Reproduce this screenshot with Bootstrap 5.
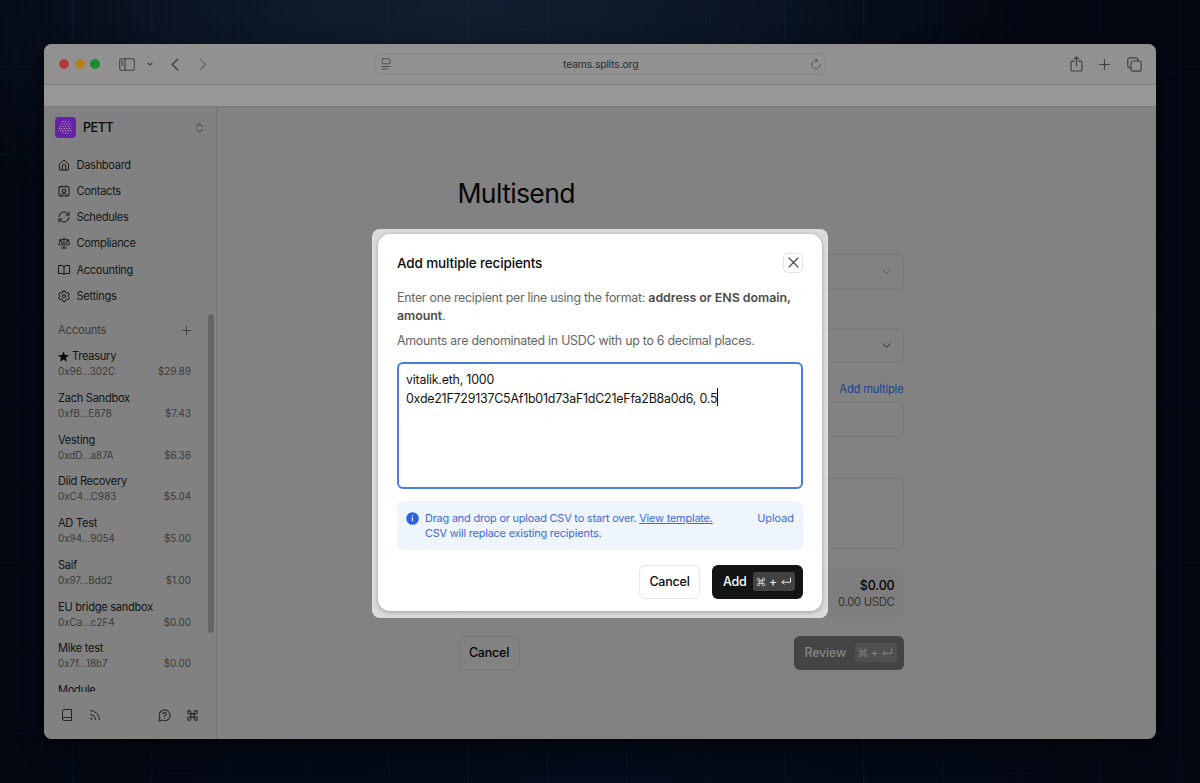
<!DOCTYPE html>
<html lang="en">
<head>
<meta charset="utf-8">
<meta name="viewport" content="width=device-width, initial-scale=1">
<title>Multisend</title>
<link href="https://cdn.jsdelivr.net/npm/bootstrap@5.3.0/dist/css/bootstrap.min.css" rel="stylesheet">
<style>
  body { width: 1200px; height: 783px; padding: 44px; overflow: hidden; font-family: Inter, sans-serif; font-size: 12px; line-height: 1.25; color: #141414;
    background:
      repeating-linear-gradient(90deg, transparent 0 72px, rgba(50,100,150,.09) 72px 73px, transparent 73px 79.1px) 0 0 / 79.1px 100%,
      repeating-linear-gradient(180deg, transparent 0 72px, rgba(50,100,150,.07) 72px 73px, transparent 73px 82.6px) 0 0 / 100% 82.6px,
      radial-gradient(ellipse 560px 300px at 460px 0, #121f30 0, #0b1524 50%, transparent 100%),
      radial-gradient(ellipse 640px 180px at 600px 100%, #030c1b 0, transparent 100%), #030711; }
  svg { fill: none; stroke: currentColor; stroke-width: 2; stroke-linecap: round; stroke-linejoin: round; flex: none; display: block; }
  .win { width: 1112px; height: 695px; border-radius: 8px; background: #828282; box-shadow: 0 8px 22px rgba(0,0,0,.6); }
  .toolbar { height: 41px; background: #919191; border-bottom: 1px solid #7d7d7d; color: #414141; padding: 0 14px 0 15px; }
  .strip { height: 21px; background: #979797; }
  .light { width: 10px; height: 10px; border-radius: 50%; }
  .url { width: 451px; height: 22px; border: 1px solid #868686; border-radius: 6px; font-size: 10.4px; color: #2c2c2c; padding: 0 4px 0 5px; letter-spacing: -.16px; margin-left: 168px; }
  .pane { height: 633px; border-top: 1px solid #7b7b7b; }
  .side { width: 173px; border-right: 1px solid #757575; background: #818181; }
  .top { height: 206px; padding: 10px 12px 0 11px; }
  .logo { width: 21px; height: 21px; border-radius: 4px; background: #6522a6; }
  .team { font-size: 12.5px; font-weight: 500; color: #060606; letter-spacing: -.4px; }
  .item { height: 26.25px; font-size: 11.1px; line-height: 14px; letter-spacing: -.32px; gap: 6.5px; padding-left: 3px; color: #181818; }
  .scroll { height: 379px; }
  .accts { width: 162px; padding: 9.4px 14px 0 14px; border-right: 1px solid #7b7b7b; overflow: hidden; }
  .acct { height: 41.7px; line-height: 15px; font-size: 11.1px; letter-spacing: -.28px; white-space: nowrap; }
  .sub { font-size: 9.8px; color: #3a3a3a; letter-spacing: .02px; }
  .thumb { width: 6px; height: 319px; border-radius: 3px; background: #646464; margin: 1px 0 0 2px; }
  .foot { height: 47px; padding: 0 17px 1px; color: #262626; }
  .form-col { width: 445px; margin-left: 241.5px; color: #050505; }
  .title { font-size: 26.6px; font-weight: 400; height: 147px; padding-top: 69px; line-height: 34px; letter-spacing: -.65px; text-indent: -1px; }
  .box { border: 1px solid #777; border-radius: 6px; }
  .sel { height: 35px; padding-right: 11px; }
  .total { height: 49px; background: #7e7e7e; border-radius: 6px; padding: 2px 9px 0 0; font-size: 12.5px; line-height: 17px; letter-spacing: -.15px; }
  .bt { height: 34px; border-radius: 6px; font-size: 12.5px; font-weight: 500; padding: 0 10px; letter-spacing: -.22px; }
  .cancel { width: 61px; padding: 0; }
  .kbd-chip { width: 42px; height: 19px; border-radius: 3px; font-size: 12px; line-height: 12px; }
  .halo { position: absolute; left: 372px; top: 228.5px; width: 456px; height: 389px; padding: 5.5px 6px 6.5px; border-radius: 8px; background: rgba(255,255,255,.72); }
  .dlg { height: 377px; border-radius: 12px; background: #fff; padding: 18px 19px 12px; box-shadow: 0 1px 5px rgba(0,0,0,.3); font-size: 12.4px; letter-spacing: -.265px; color: #0b0b0b; }
  .head { height: 21px; font-weight: 500; font-size: 13.5px; letter-spacing: -.14px; }
  .head span:first-child { padding-top: 1px; }
  .close-x { width: 20px; height: 20px; border: 1px solid #e3e3e3; border-radius: 5px; color: #444; }
  .copy { color: #656565; line-height: 18.5px; white-space: nowrap; }
  .copy b { font-weight: 600; color: #4c4c4c; letter-spacing: -.03px; }
  .ta { height: 127px; border: 2px solid #4580df; border-radius: 6px; margin-top: 11px; padding: 7.5px 7px; line-height: 18.5px; letter-spacing: -.21px; color: #121212; }
  .caret { display: inline-block; width: 1px; height: 18px; background: #000; vertical-align: middle; margin: -6px 0 -2px; }
  .note { height: 49px; border-radius: 6px; background: #eef5fe; color: #3f69db; margin-top: 12px; padding: 10px 9px; font-size: 10.9px; line-height: 15.7px; letter-spacing: -.18px; }
</style>
</head>
<body>
<svg class="d-none">
  <symbol id="cmd" viewBox="0 0 24 24"><path d="M15 6v12a3 3 0 1 0 3-3H6a3 3 0 1 0 3 3V6a3 3 0 1 0-3 3h12a3 3 0 1 0-3-3"/></symbol>
  <symbol id="ret" viewBox="0 0 24 24"><path d="M21 4v8.5H4M8 8.5l-4 4 4 4"/></symbol>
  <symbol id="down" viewBox="0 0 24 24"><path d="m4 8 8 8 8-8"/></symbol>
</svg>
<div class="win overflow-hidden">
  <div class="toolbar d-flex align-items-center">
    <div class="d-flex" style="gap:5.6px">
      <span class="light" style="background:#b33b3b"></span><span class="light" style="background:#b57f1a"></span><span class="light" style="background:#168e30"></span>
    </div>
    <svg width="16" height="13" viewBox="0 0 16 13" style="margin-left:19px;stroke-width:1.1"><rect x=".7" y=".7" width="14.6" height="11.6" rx="1.8"/><path d="M6 .7v11.6M2.5 3h1.6M2.5 5h1.6M2.5 7h1.6"/></svg>
    <svg width="6" height="6" viewBox="0 0 6 6" style="margin-left:12px;stroke-width:1.1"><path d="m.8 2 2.2 2 2.2-2"/></svg>
    <svg width="8" height="13" viewBox="0 0 8 13" style="margin-left:18px;stroke-width:1.4"><path d="M6.8 1 1.2 6.5 6.8 12"/></svg>
    <svg width="8" height="13" viewBox="0 0 8 13" style="margin-left:19.5px;stroke-width:1.3;color:#686868"><path d="M1.2 1.3 6.6 6.5 1.2 11.7"/></svg>
    <div class="url d-flex align-items-center justify-content-between">
      <svg width="10" height="12" viewBox="0 0 10 12" style="stroke-width:1;color:#505050"><rect x="1" y=".8" width="8" height="5" rx="1"/><path d="M.8 8.5h8.4M.8 11h5.4"/></svg>
      <span>teams.splits.org</span>
      <svg width="10" height="12" viewBox="0 0 10 12" style="stroke-width:1;color:#555"><path d="M5 2.5A4.2 4.2 0 1 0 9.2 6.7M5 2.5h1M4.8.8l1.8 1.7-1.8 1.7"/></svg>
    </div>
    <svg class="ms-auto" width="13" height="16" viewBox="0 0 13 16" style="stroke-width:1.2"><path d="M4 5.2H2.4A1.4 1.4 0 0 0 1 6.6v7A1.4 1.4 0 0 0 2.4 15h8.2a1.4 1.4 0 0 0 1.4-1.4v-7a1.4 1.4 0 0 0-1.4-1.4H9M6.5 9.5V1M4.3 3l2.2-2.2L8.7 3"/></svg>
    <svg width="11" height="11" viewBox="0 0 11 11" style="margin-left:16px;stroke-width:1.2"><path d="M5.5.6v9.8M.6 5.5h9.8"/></svg>
    <svg width="15" height="15" viewBox="0 0 15 15" style="margin-left:17px;stroke-width:1.2"><rect x="4" y="4" width="10.2" height="10.2" rx="2"/><path d="M3.8 10.8H2.6a1.8 1.8 0 0 1-1.8-1.8V2.6A1.8 1.8 0 0 1 2.6.8H9a1.8 1.8 0 0 1 1.8 1.8v1.2"/></svg>
  </div>
  <div class="strip"></div>
  <div class="pane d-flex">
    <aside class="side d-flex flex-column">
      <div class="top">
        <div class="d-flex align-items-center">
          <div class="logo d-flex align-items-center justify-content-center">
            <svg width="15" height="15" viewBox="0 0 15 15" style="color:#c9a5bd;stroke-width:1.2;stroke-dasharray:.1 2.5"><path d="M5 1.5h6M3.7 3.8h8.5M2.4 6.1h11M1.1 8.4h13M2.4 10.7h11M5 13h6"/></svg>
          </div>
          <span class="team" style="margin-left:7px">PETT</span>
          <svg class="ms-auto" width="9" height="10" viewBox="0 0 9 10" style="stroke-width:1;color:#343434"><path d="M1.5 3.5l3-2.7 3 2.7M1.5 6.5l3 2.7 3-2.7"/></svg>
        </div>
        <nav style="padding-top:13.5px">
          <div class="item d-flex align-items-center"><svg width="12" height="12" viewBox="0 0 24 24"><path d="M3 10 12 2l9 8v11a1 1 0 0 1-1 1H4a1 1 0 0 1-1-1zM8.5 22v-8a3.5 3.5 0 0 1 7 0v8"/></svg>Dashboard</div>
          <div class="item d-flex align-items-center"><svg width="12" height="12" viewBox="0 0 24 24"><rect x="2" y="3.5" width="20" height="18.5" rx="1"/><path d="M7 1.5v2M17 1.5v2M6.5 22v-2a3 3 0 0 1 3-3h5a3 3 0 0 1 3 3v2"/><circle cx="12" cy="11.5" r="3.5"/></svg>Contacts</div>
          <div class="item d-flex align-items-center"><svg width="12" height="12" viewBox="0 0 24 24"><path d="M2 11a10 10 0 0 1 18-5l2 2M22 2v6h-6M22 13a10 10 0 0 1-18 5l-2-2M2 22v-6h6"/></svg>Schedules</div>
          <div class="item d-flex align-items-center"><svg width="12" height="12" viewBox="0 0 24 24"><path d="M12 2v20M7 22h10M2 6h3c2 0 5-1 7-2 2 1 5 2 7 2h3M5 6 1.5 15c2 1.8 5 1.8 7 0zM19 6l-3.5 9c2 1.8 5 1.8 7 0z"/></svg>Compliance</div>
          <div class="item d-flex align-items-center"><svg width="12" height="12" viewBox="0 0 24 24"><path d="M12 6v15M12 6a4 4 0 0 0-4-3H1v16h8a3 3 0 0 1 3 3 3 3 0 0 1 3-3h8V3h-7a4 4 0 0 0-4 3"/></svg>Accounting</div>
          <div class="item d-flex align-items-center"><svg width="12" height="12" viewBox="0 0 24 24"><path d="M9.7 2h4.6l.8 3.2 2 1.2 3.2-.9 2.3 4-2.4 2.3v1.4l2.4 2.3-2.3 4-3.2-.9-2 1.2-.8 3.2H9.7l-.8-3.2-2-1.2-3.2.9-2.3-4 2.4-2.3v-1.4L1.4 9.5l2.3-4 3.2.9 2-1.2z"/><circle cx="12" cy="12.5" r="3.3"/></svg>Settings</div>
        </nav>
      </div>
      <div class="scroll d-flex">
        <div class="accts">
          <div class="d-flex justify-content-between align-items-center" style="height:17px;margin-bottom:10px;font-size:11.1px;letter-spacing:-.15px;color:#3d3d3d"><span>Accounts</span><svg width="9" height="9" viewBox="0 0 9 9" style="stroke-width:1"><path d="M4.5.5v8M.5 4.5h8"/></svg></div>
          <div class="acct"><div class="d-flex align-items-center"><svg width="11" height="11" viewBox="0 0 24 24" style="fill:#0c0c0c;stroke:none;margin-right:3px"><path d="m12 .5 3.3 8 8.7.7-6.6 5.6 2 8.5L12 18.7l-7.4 4.6 2-8.5L0 9.2l8.7-.7z"/></svg>Treasury</div><div class="sub d-flex justify-content-between"><span>0x96...302C</span><span>$29.89</span></div></div>
          <div class="acct">Zach Sandbox<div class="sub d-flex justify-content-between"><span>0xfB...E878</span><span>$7.43</span></div></div>
          <div class="acct">Vesting<div class="sub d-flex justify-content-between"><span>0xdD...a87A</span><span>$6.36</span></div></div>
          <div class="acct">Diid Recovery<div class="sub d-flex justify-content-between"><span>0xC4...C983</span><span>$5.04</span></div></div>
          <div class="acct">AD Test<div class="sub d-flex justify-content-between"><span>0x94...9054</span><span>$5.00</span></div></div>
          <div class="acct">Saif<div class="sub d-flex justify-content-between"><span>0x97...Bdd2</span><span>$1.00</span></div></div>
          <div class="acct">EU bridge sandbox<div class="sub d-flex justify-content-between"><span>0xCa...c2F4</span><span>$0.00</span></div></div>
          <div class="acct">Mike test<div class="sub d-flex justify-content-between"><span>0x7f...18b7</span><span>$0.00</span></div></div>
          <div class="acct">Module</div>
        </div>
        <div class="thumb"></div>
      </div>
      <div class="foot d-flex align-items-center">
        <svg width="12" height="12" viewBox="0 0 24 24"><path d="M3 20V4a3 3 0 0 1 3-3h15v22H6a3 3 0 0 1-3-3 3 3 0 0 1 3-3h15"/></svg>
        <svg width="12" height="12" viewBox="0 0 24 24" style="margin-left:16px"><path d="M3 11a10 10 0 0 1 10 10M3 3a18 18 0 0 1 18 18"/><circle cx="4.5" cy="19.5" r="1"/></svg>
        <svg class="ms-auto" width="13" height="13" viewBox="0 0 24 24"><path d="M7.5 20.5A10 10 0 1 0 3.5 16.5L1.8 22zM9 9a3 3 0 0 1 6 .8c0 2-3 2.4-3 4M12 17v.1"/></svg>
        <svg width="13" height="13" style="margin-left:15px"><use href="#cmd"/></svg>
      </div>
    </aside>
    <main>
      <div class="form-col">
        <h1 class="title m-0">Multisend</h1>
        <div class="box sel d-flex align-items-center justify-content-end"><svg width="11" height="11" style="color:#4c4c4c"><use href="#down"/></svg></div>
        <div class="box sel d-flex align-items-center justify-content-end" style="margin-top:39px"><svg width="11" height="11" style="color:#222"><use href="#down"/></svg></div>
        <div class="text-end" style="height:39px;padding-top:18.5px;font-size:11.2px;letter-spacing:-.18px;color:#1a438e">Add multiple</div>
        <div class="box sel"></div>
        <div class="box" style="height:71px;margin-top:41px"></div>
        <div class="total d-flex flex-column justify-content-center text-end" style="margin-top:19px"><span style="font-weight:500">$0.00</span><span style="font-size:11.2px;color:#333;letter-spacing:-.25px">0.00 USDC</span></div>
        <div class="d-flex justify-content-between" style="margin-top:18.5px">
          <div class="bt box cancel d-flex align-items-center justify-content-center">Cancel</div>
          <div class="bt d-flex align-items-center justify-content-between" style="width:110px;background:#444;color:#858585;padding:0 7px 0 11px"><span>Review</span><span class="kbd-chip d-flex align-items-center justify-content-center" style="background:#505050;gap:3px"><svg width="10" height="10"><use href="#cmd"/></svg>+<svg width="12" height="12"><use href="#ret"/></svg></span></div>
        </div>
      </div>
    </main>
  </div>
</div>

<div class="halo">
  <div class="dlg">
    <div class="head d-flex justify-content-between align-items-center"><span>Add multiple recipients</span><span class="close-x p-0 d-flex align-items-center justify-content-center"><svg width="11" height="11" viewBox="0 0 11 11" style="stroke-width:1.1"><path d="m1 1 9 9M10 1l-9 9"/></svg></span></div>
    <div class="copy" style="margin-top:15.5px">Enter one recipient per line using the format: <b>address or ENS domain,<br>amount</b>.</div>
    <div class="copy" style="margin-top:6.5px">Amounts are denominated in USDC with up to 6 decimal places.</div>
    <div class="ta">vitalik.eth, 1000<br>0xde21F729137C5Af1b01d73aF1dC21eFfa2B8a0d6, 0.5<span class="caret"></span></div>
    <div class="note d-flex"><svg width="13" height="13" viewBox="0 0 13 13" style="margin:1px 6px 0 0;fill:#2a62e2;stroke:none"><circle cx="6.5" cy="6.5" r="6.3"/><path d="M5.9 3h1.2v1.2H5.9zM5.5 5.5h1.6v3.7H5.9V6.5h-.4z" fill="#fff"/></svg><div>Drag and drop or upload CSV to start over. <u>View template.</u><br>CSV will replace existing recipients.</div><span class="ms-auto" style="letter-spacing:0">Upload</span></div>
    <div class="d-flex justify-content-end" style="margin-top:15px;gap:12px">
      <div class="bt cancel d-flex align-items-center justify-content-center" style="border:1px solid #e6e6e6">Cancel</div>
      <div class="bt d-flex align-items-center justify-content-between" style="width:91px;background:#141414;color:#fff;padding:0 8px 0 11px"><span>Add</span><span class="kbd-chip d-flex align-items-center justify-content-center" style="background:#424242;color:#e6e6e6;gap:3px"><svg width="10" height="10"><use href="#cmd"/></svg>+<svg width="12" height="12"><use href="#ret"/></svg></span></div>
    </div>
  </div>
</div>
<script src="https://cdn.jsdelivr.net/npm/bootstrap@5.3.0/dist/js/bootstrap.bundle.min.js"></script>
</body>
</html>
